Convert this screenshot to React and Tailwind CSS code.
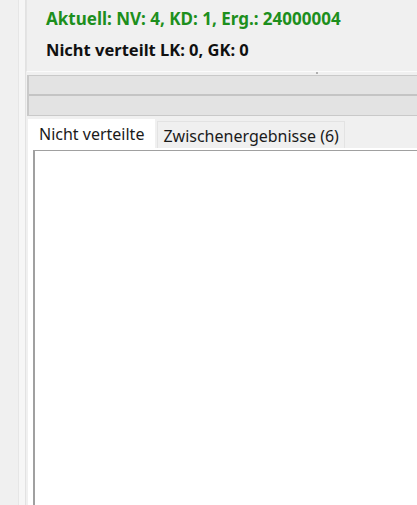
import React from "react";

const App = () => {
  return (
    <div className="flex h-[505px] w-[417px] overflow-hidden bg-[#f0f0f0] font-['Noto_Sans',sans-serif]">
      {/* left gutter */}
      <div className="w-[18px] shrink-0 bg-[#f0f0f0]" />
      <div className="w-[1px] shrink-0 bg-[#e6e6e6]" />
      <div className="w-[6px] shrink-0 bg-[#f6f6f6]" />
      <div className="w-[1px] shrink-0 bg-[#e2e2e2]" />

      <div className="flex min-w-0 flex-1 flex-col">
        {/* status box */}
        <div className="relative h-[72px] shrink-0 border-b border-l border-b-[#fbfbfb] border-l-[#e4e4e4] pl-[19px] pt-[6px]">
          <div className="text-[17px] font-bold leading-[26px] text-[#1d8f1d] whitespace-nowrap">
            Aktuell: NV: 4, KD: 1, Erg.: 24000004
          </div>
          <div className="mt-[5px] text-[16.5px] font-bold leading-[26px] text-[#101010] whitespace-nowrap">
            Nicht verteilt LK: 0, GK: 0
          </div>
          {/* splitter grip */}
          <div className="absolute bottom-[-3px] left-[289px] h-[2px] w-[2px] bg-[#b0b0b0]" />
        </div>

        {/* empty bars */}
        <div className="mt-[3px] ml-[1px] flex flex-col border-l-2 border-t border-[#c9c9c9]">
          <div className="h-[20px] border-b-2 border-[#c4c4c4] bg-[#e3e3e3]" />
          <div className="h-[20px] border-b border-[#c9c9c9] bg-[#e3e3e3]" />
        </div>

        {/* tabs */}
        <div className="mt-[3px] flex flex-1 flex-col pl-[2px]">
          <div className="flex h-[29px] items-end">
            <div className="flex h-[29px] items-center bg-white px-[11px] pt-[1px] text-[16px] text-[#1a1a1a] whitespace-nowrap">
              Nicht verteilte
            </div>
            <div className="ml-[2px] flex h-[27px] items-center border border-b-0 border-[#e3e3e3] bg-[#f0f0f0] px-[5px] pt-[2px] text-[16px] text-[#1a1a1a] whitespace-nowrap">
              Zwischenergebnisse (6)
            </div>
          </div>
          <div className="flex flex-1 bg-white pl-[5px] pt-[2px]">
            <div className="flex-1 border-l-2 border-t border-[#a0a0a0] bg-white" />
          </div>
        </div>
      </div>
    </div>
  );
};

export default App;
